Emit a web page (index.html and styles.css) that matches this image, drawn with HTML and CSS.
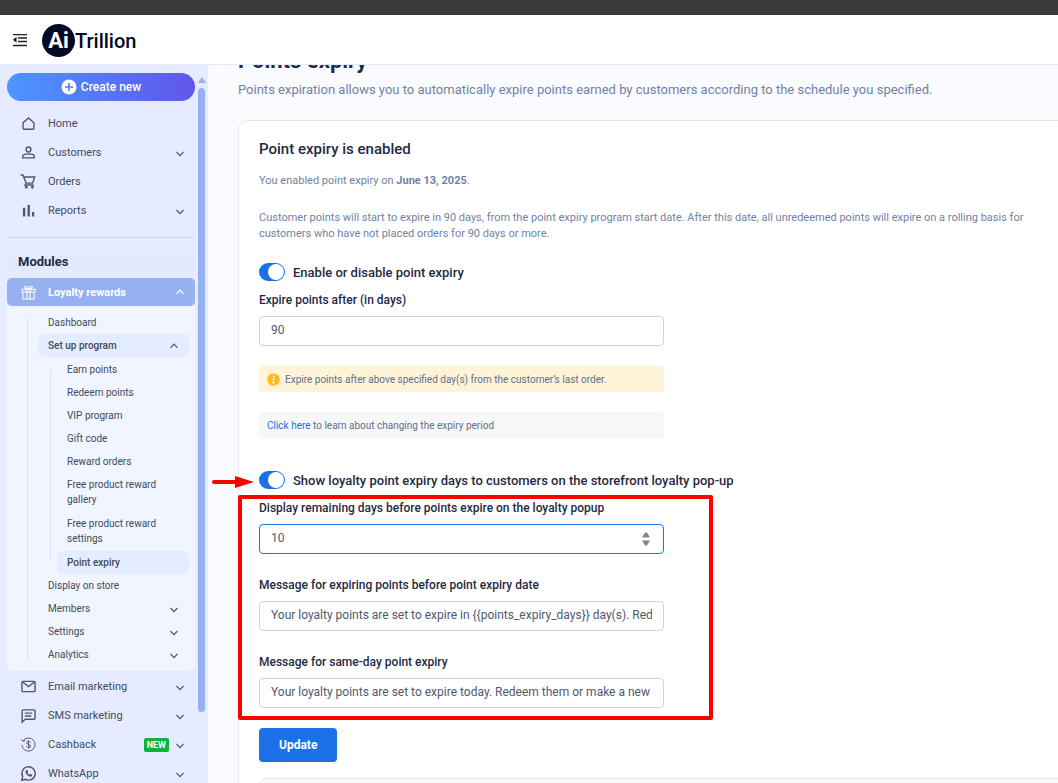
FILE: index.html
```
<!DOCTYPE html>
<html lang="en">
<head>
	<meta charset="UTF-8">
	<meta name="viewport" content="width=device-width, initial-scale=1">
	<title>Points expiry - AiTrillion</title>
	<link rel="stylesheet" href="styles.css">
</head>
<body>
	<!-- shared icons -->
	<svg class="sprite" aria-hidden="true">
		<symbol id="down" viewBox="0 0 10 10"><path d="M1.500 4 5 7.600l3.500-3.600" fill="none" stroke="currentColor" stroke-width="1.200"/></symbol>
		<symbol id="up" viewBox="0 0 10 10"><path d="M1.500 6.800 5 3.200l3.500 3.600" fill="none" stroke="currentColor" stroke-width="1.200"/></symbol>
	</svg>

	<div class="topbar"></div>
	<header class="header">
		<button class="menu-btn" aria-label="Toggle menu">
			<svg width="16" height="14" viewBox="0 0 16 14"><path d="M1 .5h14M6 4h9M6 7.500h9M1 11.500h14" stroke="#222" stroke-width="1.300"/><path d="M4.500 2.800v6L1 5.800z" fill="#111"/></svg>
		</button>
		<a class="logo" href="#"><span class="logo-ai">Ai</span><span class="logo-text">Trillion</span></a>
	</header>

	<div class="layout">
		<aside class="sidebar">
			<nav class="nav">
				<button class="create">
					<svg width="16" height="16" viewBox="0 0 16 16"><circle cx="8" cy="8" r="7.500" fill="#fff"/><path d="M8 4v8M4 8h8" stroke="#4a80f6" stroke-width="1.600"/></svg>
					Create new
				</button>
				<ul class="menu">
					<li><a href="#">
						<svg class="icon" viewBox="0 0 16 16"><path d="M2.200 7.200 8 2l5.800 5.200v5.500a1.500 1.500 0 0 1-1.500 1.500H3.700a1.500 1.500 0 0 1-1.500-1.500z"/></svg>
						<span>Home</span></a></li>
					<li><a href="#">
						<svg class="icon" viewBox="0 0 16 16"><circle cx="8" cy="4.800" r="2.600"/><path d="M1.800 13.700v-1.500c0-1.600 2.800-2.700 6.200-2.700s6.200 1.100 6.200 2.700v1.500z"/></svg>
						<span>Customers</span><svg class="chev"><use href="#down"/></svg></a></li>
					<li><a href="#">
						<svg class="icon" viewBox="0 0 16 16"><path d="M-.5 1h2.600l3.300 8.700h7l2.200-6.500H3M5.400 9.700l-1.200 2h9.500"/><circle cx="5.600" cy="14" r=".8"/><circle cx="12.200" cy="14" r=".8"/></svg>
						<span>Orders</span></a></li>
					<li><a href="#">
						<svg class="icon" viewBox="0 0 16 16"><path d="M3.300 5v9.500M8.200 2V14.500M12.900 9.500V14.500" stroke-width="2.500"/></svg>
						<span>Reports</span><svg class="chev"><use href="#down"/></svg></a></li>
				</ul>
				<h2 class="modules">Modules</h2>
				<a class="loyalty" href="#">
					<svg class="icon" viewBox="0 0 16 16"><path d="M1 4.500h14v3H1zM2 7.500v7.500h12V7.500M6.300 4.500V15M9.700 4.500V15M8 4.300C5 4.300 4 3.500 4 2.300S6.500.5 8 4.300C9.500.5 12 1.100 12 2.300s-1 2-4 2"/></svg>
					<span>Loyalty rewards</span><svg class="chev"><use href="#up"/></svg>
				</a>
				<div class="panel">
					<ul class="sub">
						<li><a href="#">Dashboard</a></li>
						<li>
							<a class="active" href="#">Set up program<svg class="chev"><use href="#up"/></svg></a>
							<ul class="sub2">
								<li><a href="#">Earn points</a></li>
								<li><a href="#">Redeem points</a></li>
								<li><a href="#">VIP program</a></li>
								<li><a href="#">Gift code</a></li>
								<li><a href="#">Reward orders</a></li>
								<li><a class="long" href="#">Free product reward gallery</a></li>
								<li><a class="long" href="#">Free product reward settings</a></li>
								<li><a class="active" href="#">Point expiry</a></li>
							</ul>
						</li>
						<li><a href="#">Display on store</a></li>
						<li><a href="#">Members<svg class="chev"><use href="#down"/></svg></a></li>
						<li><a href="#">Settings<svg class="chev"><use href="#down"/></svg></a></li>
						<li><a href="#">Analytics<svg class="chev"><use href="#down"/></svg></a></li>
					</ul>
				</div>
				<ul class="menu menu-bottom">
					<li><a href="#">
						<svg class="icon" viewBox="0 0 16 16"><rect x="1" y="2.500" width="14" height="11" rx="1"/><path d="M2 3.500 8 8l6-4.500"/></svg>
						<span>Email marketing</span><svg class="chev"><use href="#down"/></svg></a></li>
					<li><a href="#">
						<svg class="icon" viewBox="0 0 16 16"><path d="M2.500 2h11A1.300 1.300 0 0 1 15 3.300v7.400a1.300 1.300 0 0 1-1.300 1.300H4.500L1.200 15V3.300A1.300 1.300 0 0 1 2.500 2zM4 5.500h8M4 8.500h7"/></svg>
						<span>SMS marketing</span><svg class="chev"><use href="#down"/></svg></a></li>
					<li><a href="#">
						<svg class="icon thin" viewBox="0 0 16 16"><path d="M2.300 4A7 7 0 1 1 1 8.500M.5 2.500l1.500 2 2.500-.6M10.200 6C9.800 4.300 6 4.200 6 6.200c0 2.200 4.300 1.300 4.300 3.600 0 2-4 2-4.500.1M8.100 3.500v9"/></svg>
						<span>Cashback</span><em class="new">NEW</em><svg class="chev"><use href="#down"/></svg></a></li>
					<li><a href="#">
						<svg class="icon" viewBox="0 0 16 16"><path d="m.8 15.200 1-3.900A7.100 7.100 0 1 1 4.700 14.200z"/><path class="solid" d="M5.500 4.500 6.700 4l1 2.200-.8.900c.5 1 1.200 1.700 2.200 2.100l.9-.9 2 1c0 1.300-.8 2-2 2-2.600-.2-5.200-3-5.200-5.200 0-.7.300-1.200.7-1.600z"/></svg>
						<span>WhatsApp</span><svg class="chev"><use href="#down"/></svg></a></li>
				</ul>
			</nav>
			<div class="scroll">
				<i class="scroll-up"></i>
				<i class="scroll-thumb"></i>
			</div>
		</aside>

		<main class="main">
			<h1>Points expiry</h1>
			<p class="lead">Points expiration allows you to automatically expire points earned by customers according to the schedule you specified.</p>

			<section class="card">
				<h2>Point expiry is enabled</h2>
				<p class="text">You enabled point expiry on <b>June 13, 2025</b>.</p>
				<p class="text">Customer points will start to expire in 90 days, from the point expiry program start date. After this date, all unredeemed points will expire on a rolling basis for customers who have not placed orders for 90 days or more.</p>

				<label class="switch"><input type="checkbox" checked>Enable or disable point expiry</label>
				<div class="field">
					<label for="expire">Expire points after (in days)</label>
					<input type="text" id="expire" value="90">
				</div>
				<p class="note note-warn">
					<svg width="13" height="13" viewBox="0 0 13 13"><circle cx="6.500" cy="6.500" r="6.200" fill="#fdba1c"/><circle cx="7" cy="3.400" r=".9" fill="#fff"/><path d="M5.300 5.600h1.500L6 9.800h1.500" fill="none" stroke="#fff" stroke-width="1.200"/></svg>
					Expire points after above specified day(s) from the customer’s last order.
				</p>
				<p class="note"><span><a href="#">Click here</a> to learn about changing the expiry period</span></p>

				<div class="marked storefront">
					<svg class="arrow" width="44" height="14" viewBox="0 0 44 14"><path d="M3 7h24" stroke="#f00" stroke-width="4" stroke-linecap="round"/><path d="M24 1l19 6-19 6z" fill="#f00"/></svg>
					<label class="switch"><input type="checkbox" checked>Show loyalty point expiry days to customers on the storefront loyalty pop-up</label>
				</div>
				<div class="marked">
					<div class="frame"></div>
					<div class="field">
						<label for="days">Display remaining days before points expire on the loyalty popup</label>
						<div class="number">
							<input class="focused" type="number" id="days" value="10">
							<svg class="spin" width="8" height="14" viewBox="0 0 8 14"><path d="M0 5.500 3 .5h2l3 5zM0 8.500l3 5h2l3-5z" fill="#858585"/></svg>
						</div>
					</div>
					<div class="field">
						<label for="before">Message for expiring points before point expiry date</label>
						<input type="text" id="before" value="Your loyalty points are set to expire in {{points_expiry_days}} day(s). Redeem them or make a new purchase.">
					</div>
					<div class="field">
						<label for="sameday">Message for same-day point expiry</label>
						<input type="text" id="sameday" value="Your loyalty points are set to expire today. Redeem them or make a new purchase.">
					</div>
				</div>
				<button class="update">Update</button>
				<div class="inner"></div>
			</section>
		</main>
	</div>
</body>
</html>
```
FILE: styles.css
```
*{margin:0;padding:0;box-sizing:border-box;}
body{height:100vh;display:flex;flex-direction:column;overflow:hidden;font-family:Roboto,"Liberation Sans",sans-serif;font-size:12px;color:#1f2a44;background-color:#fafbff;}
ul{list-style:none;}
a{color:inherit;text-decoration:none;}
button,input{font-family:inherit;}
button{border:0;background:none;cursor:pointer;}
.sprite{display:none;}

/* header */
.topbar{flex:none;height:15px;background-color:#3b3b3b;}
.header{flex:none;display:flex;align-items:center;gap:14px;height:50px;padding:2px 0 0 12px;background-color:#fff;border-bottom:1px solid #e5eaff;}
.menu-btn{display:flex;}
.logo{display:flex;align-items:center;color:#030a26;}
.logo-ai{width:33px;height:33px;border-radius:50%;background-color:#030a26;color:#fff;font-size:22px;font-weight:700;line-height:33px;text-align:center;}
.logo-text{font-size:20px;font-weight:500;}

.layout{flex:1;min-height:0;display:flex;}

/* sidebar */
.sidebar{flex:none;width:208px;display:flex;gap:3px;padding-left:7px;background-color:#e6ebff;overflow:hidden;}
.nav{width:188px;padding-top:8px;color:#434b5b;}
.create{display:flex;align-items:center;justify-content:center;gap:4px;width:100%;height:28px;border-radius:14px;background:linear-gradient(90deg,#4c96ff,#6056ea);color:#fff;font-size:12px;font-weight:500;}
.menu{padding:8px 0 12px;border-bottom:1px solid #d0daf2;}
.menu a,.loyalty{display:flex;align-items:center;height:29px;padding:0 10px 0 14px;font-size:11px;}
.menu span,.loyalty span{flex:1;margin-left:12px;}
.icon{width:15px;height:15px;fill:none;stroke:#4d5870;stroke-width:1.500;overflow:visible;}
.icon .solid{fill:#4d5870;stroke:none;}
.thin{stroke-width:1;}
.chev{width:10px;height:10px;color:#4d5870;}
.modules{margin:16px 0 8px;padding-left:11px;background-color:#e2e9fd;color:#262d3d;font-size:13px;line-height:16px;font-weight:700;}
.loyalty{height:28px;border-radius:5px;background-color:#96b1f0;color:#fff;font-weight:700;}
.loyalty .icon{stroke:#fff;stroke-width:1.100;}
.loyalty .chev{color:#fff;}
.panel{padding:12px 6px 12px 20px;border-radius:0 0 6px 6px;background-color:#f0f5ff;}
.sub,.sub2{display:flow-root;border-left:1px solid #d6e2fa;}
.sub{font-size:10px;line-height:15px;}
.sub > li{padding-left:10px;}
.sub > li:first-child{margin-top:-7px;}
.sub > li:last-child{margin-bottom:-7px;}
.sub a{display:flex;align-items:center;justify-content:space-between;padding:4px 10px;border-radius:6px;}
.sub .active{background-color:#e3edff;font-weight:500;}
/* the guide line starts and ends at the middle of the outer rows */
.sub2{margin:13px 0 14px 12px;}
.sub2 li{padding-left:6px;}
.sub2 li:first-child{margin-top:-12px;}
.sub2 li:last-child{margin-bottom:-14px;}
.sub .long{padding:4px 10px 5px;}
.menu-bottom{padding:1px 0 0;border:0;}
.new{margin-right:6px;padding:0 3px;border-radius:2px;background-color:#0db23a;color:#fff;font-size:9px;line-height:14px;font-style:normal;font-weight:700;}
.scroll{width:7px;display:flex;flex-direction:column;align-items:center;gap:5px;padding:12px 0 71px;}
.scroll-up{border:4px solid transparent;border-top:0;border-bottom:6px solid #96b1f0;}
.scroll-thumb{flex:1;width:7px;border-radius:4px;background-color:#96b1f0;}

/* content */
.main{flex:1;min-width:0;overflow:hidden;padding-left:30px;}
.main h1{margin-top:-18px;font-size:22px;line-height:28px;font-weight:700;}
.lead{margin-top:6px;color:#7182a5;font-size:13px;line-height:18px;}
.card{margin:21px -30px 0 0;padding:18px 20px;border:1px solid #e7e8ec;border-radius:10px;background-color:#fff;}
.card h2{margin-bottom:14px;font-size:15px;line-height:20px;font-weight:500;}
.text{margin:0 10px 21px 0;color:#7182a5;font-size:11px;line-height:16px;}
.switch{display:flex;align-items:center;gap:8px;height:18px;font-size:13px;font-weight:500;}
.switch input{appearance:none;display:flex;width:26px;height:18px;padding:1px;border-radius:9px;background-color:#aab4c5;cursor:pointer;}
.switch input:before{content:"";width:16px;height:16px;border-radius:50%;background-color:#fff;}
.switch input:checked{justify-content:flex-end;background-color:#1b72e8;}
.field{max-width:405px;margin-top:11px;}
.field label{display:block;font-weight:500;line-height:16px;margin-bottom:8px;white-space:nowrap;}
.field input{display:block;width:100%;height:30px;padding:0 11px 2px;border:1px solid #cfd3d9;border-radius:4px;background-color:#fff;color:#4f5a6e;font-size:12px;outline:0;}
.field .focused{border-color:#1b72e8;}
.field input[type=number]{appearance:textfield;}
.number{position:relative;}
.spin{position:absolute;top:8px;right:14px;}
.note{display:flex;align-items:center;gap:5px;max-width:405px;min-height:26px;margin-top:20px;padding:0 8px;border-radius:3px;background-color:#f7f7f8;color:#61708a;font-size:10px;}
.note a{color:#1b72e8;}
.note-warn{background-color:#fff4d8;}
.marked{position:relative;}
.storefront{margin-top:33px;}
.marked .field + .field{margin-top:23px;}
.arrow{position:absolute;left:-48px;top:4px;}
.frame{position:absolute;top:6px;left:-21px;width:475px;bottom:-12px;border:4px solid #f00;border-radius:2px;pointer-events:none;}
.marked .frame + .field{margin-top:0;padding-top:11px;}
.update{margin-top:20px;padding:0 20px;height:34px;border-radius:4px;background-color:#1b72e8;color:#fff;font-size:12px;font-weight:700;}
.inner{margin-top:16px;height:60px;border:1px solid #e7e8ec;border-radius:8px;background-color:#fafbff;}
```
